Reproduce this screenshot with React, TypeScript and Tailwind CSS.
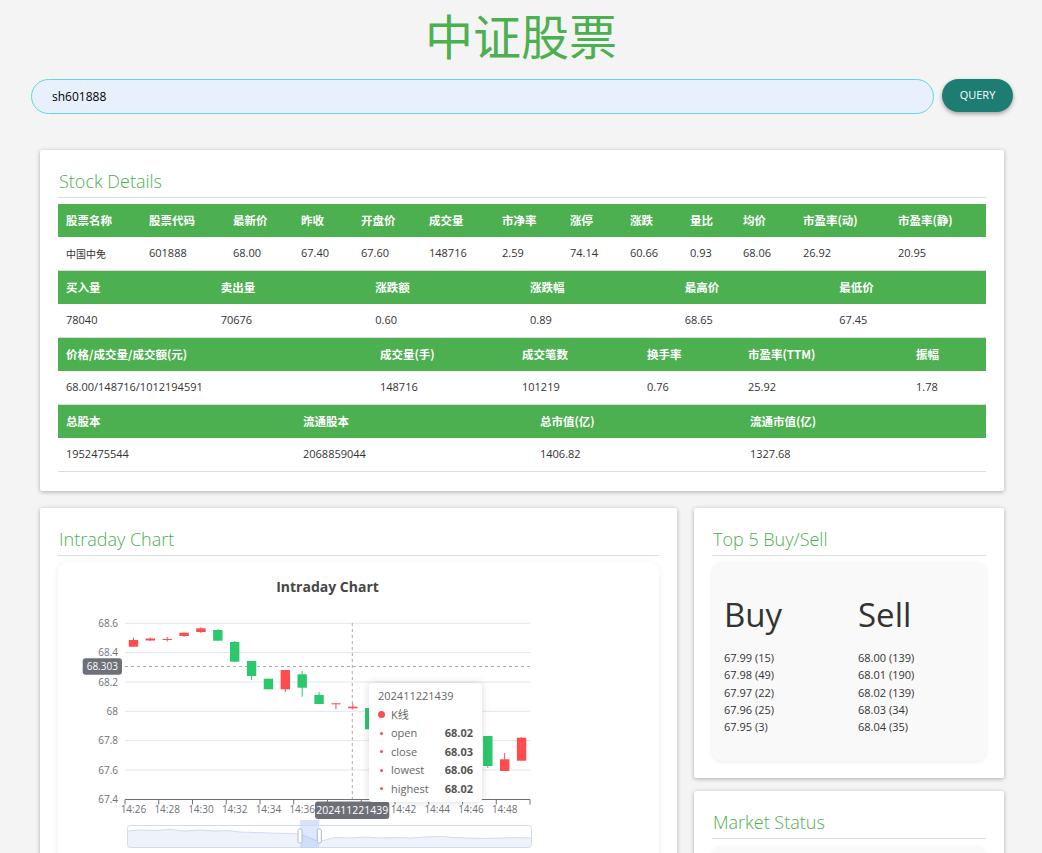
import React from "react";

const RED = "#ff4d4f";
const GREEN = "#2dc76d";

type Candle = [number, "r" | "g", number, number, number, number];

// [index, colour, bodyTop, bodyBottom, wickTop, wickBottom] in page pixels
const candles: Candle[] = [
  [0, "r", 640, 646.7, 637.7, 646.7],
  [1, "r", 638.5, 640.5, 637.5, 641],
  [2, "r", 639, 640, 637, 641.5],
  [3, "r", 632.7, 636, 632.5, 637],
  [4, "r", 628.3, 632, 627.3, 633],
  [5, "g", 630, 640.7, 629, 640.7],
  [6, "g", 642, 661.7, 641, 661.7],
  [7, "g", 661, 676, 661, 680],
  [8, "g", 678.7, 689.3, 678.7, 689.3],
  [9, "r", 670, 689.3, 670, 692],
  [10, "g", 674.3, 687.7, 671, 696.7],
  [11, "g", 695, 704, 692, 704],
  [12, "r", 703.3, 704.3, 703.3, 709.3],
  [13, "r", 706.7, 708.3, 703.5, 708.5],
  [14, "g", 708, 729.3, 708, 729.3],
  [15, "g", 728, 740, 727, 742],
  [16, "r", 732, 745, 730, 747],
  [17, "g", 740, 752, 738, 755],
  [18, "g", 745, 760, 744, 762],
  [19, "r", 748, 758, 746, 760],
  [20, "g", 742, 756, 741, 758],
  [21, "g", 736, 766, 736, 768],
  [22, "r", 759.3, 771, 753, 771],
  [23, "r", 737.7, 760.7, 737, 760.7],
];

const yLabels: [string, number][] = [
  ["68.6", 623.3],
  ["68.4", 652.6],
  ["68.2", 682],
  ["68", 711.3],
  ["67.8", 740.6],
  ["67.6", 770],
  ["67.4", 799.3],
];

const xLabels = ["14:26", "14:28", "14:30", "14:32", "14:34", "14:36", "", "", "14:42", "14:44", "14:46", "14:48"];

const cx = (i: number) => 125 + 16.875 * (i + 0.5);

function IntradaySvg() {
  return (
    <svg width="601" height="330" className="block font-['Open_Sans','Noto_Sans_CJK_SC',sans-serif]">
      <g transform="translate(-58 -562)">
        <text x="327.5" y="591.5" textAnchor="middle" fontSize="14" fontWeight="700" fill="#464646">
          Intraday Chart
        </text>
        {yLabels.map(([t, y]) => (
          <g key={t}>
            {t !== "67.4" && <line x1="125" x2="530" y1={y} y2={y} stroke="#e0e6f1" />}
            <text x="118" y={y + 3.5} textAnchor="end" fontSize="10" fill="#6e7079">
              {t}
            </text>
          </g>
        ))}
        {/* crosshair */}
        <line x1="352.3" x2="352.3" y1="623" y2="799" stroke="#aaa" strokeDasharray="3 3" />
        <line x1="125" x2="530" y1="666.5" y2="666.5" stroke="#aaa" strokeDasharray="3 3" />
        {candles.map(([i, c, bt, bb, wt, wb]) => {
          const col = c === "r" ? RED : GREEN;
          const x = cx(i);
          return (
            <g key={i}>
              <line x1={x} x2={x} y1={wt} y2={wb} stroke={col} strokeWidth="1" />
              <rect x={x - 4.7} y={bt} width="9.4" height={Math.max(bb - bt, 1)} fill={col} />
            </g>
          );
        })}
        {/* x axis */}
        <line x1="125" x2="530" y1="799.5" y2="799.5" stroke="#6e7079" />
        {Array.from({ length: 13 }).map((_, k) => (
          <line key={k} x1={125 + 33.75 * k} x2={125 + 33.75 * k} y1="799.5" y2="804.5" stroke="#6e7079" />
        ))}
        {xLabels.map((t, k) =>
          t ? (
            <text key={k} x={133.4 + 33.75 * k} y="812.8" textAnchor="middle" fontSize="10" fill="#6e7079">
              {t}
            </text>
          ) : null,
        )}
        {/* axis pointer labels */}
        <rect x="82.7" y="658.3" width="39.3" height="16.4" rx="3" fill="#6e7079" />
        <text x="102.3" y="670" textAnchor="middle" fontSize="10" fill="#fff">
          68.303
        </text>
        <rect x="315" y="801.5" width="74.3" height="17.5" rx="3" fill="#6e7079" />
        <text x="352.2" y="813.8" textAnchor="middle" fontSize="10.5" fill="#fff">
          202411221439
        </text>
        {/* data zoom */}
        <path
          d="M127.5,831 L140,830 L155,830.5 L170,829.5 L185,831 L200,830 L215,831 L228,830.5 L240,832 L255,832.5 L270,833 L285,833.5 L300,834 L310,838 L319,842 L325,840 L335,837.5 L350,838 L365,837 L380,838 L395,837.5 L410,838 L425,837 L440,836.5 L455,837.5 L470,838 L485,838.5 L500,838 L515,837.5 L531,838 L531,847.5 L127.5,847.5 Z"
          fill="#eef2fb"
          stroke="none"
        />
        <path
          d="M127.5,831 L140,830 L155,830.5 L170,829.5 L185,831 L200,830 L215,831 L228,830.5 L240,832 L255,832.5 L270,833 L285,833.5 L300,834 L310,838 L319,842 L325,840 L335,837.5 L350,838 L365,837 L380,838 L395,837.5 L410,838 L425,837 L440,836.5 L455,837.5 L470,838 L485,838.5 L500,838 L515,837.5 L531,838"
          fill="none"
          stroke="#d2dbee"
        />
        <rect x="127.5" y="825.5" width="404" height="22" rx="3" fill="none" stroke="#d2dbee" />
        <rect x="300" y="825.5" width="19.3" height="22" fill="#8fb0f7" opacity="0.3" />
        <rect x="300" y="820" width="19.3" height="5.5" fill="#d7e1f7" />
        <rect x="298" y="829" width="4" height="14" rx="1.5" fill="#fff" stroke="#acb8d1" />
        <rect x="317.3" y="829" width="4" height="14" rx="1.5" fill="#fff" stroke="#acb8d1" />
      </g>
    </svg>
  );
}

function Tooltip() {
  const rows: [string, string][] = [
    ["open", "68.02"],
    ["close", "68.03"],
    ["lowest", "68.06"],
    ["highest", "68.02"],
  ];
  return (
    <div className="absolute left-[311px] top-[121px] w-[113px] h-[119px] bg-white rounded-[4px] shadow-[0_0_8px_rgba(0,0,0,0.15)] pl-[9px] pr-[9px] pt-[4px] text-[11px] leading-[18.5px] text-[#666] font-['Open_Sans','Noto_Sans_CJK_SC',sans-serif]">
      <div>202411221439</div>
      <div className="flex items-center">
        <span className="w-[7px] h-[7px] rounded-full bg-[#ff4d4f] mr-[6px]" />
        <span>K线</span>
      </div>
      {rows.map(([k, v]) => (
        <div key={k} className="flex items-center">
          <span className="w-[3px] h-[3px] rounded-full bg-[#ff4d4f] ml-[2px] mr-[8px]" />
          <span className="flex-1">{k}</span>
          <span className="font-bold text-[#555]">{v}</span>
        </div>
      ))}
    </div>
  );
}

function SectionTitle({ children }: { children: React.ReactNode }) {
  return (
    <h2 className="text-[18px] leading-[24px] font-light text-[#4caf50] pb-[4px] border-b border-[#ddd] pl-px">
      {children}
    </h2>
  );
}

function DataTable({ grid, head, row }: { grid: string; head: string[]; row: React.ReactNode[] }) {
  return (
    <div>
      <div className={`grid ${grid} h-[33px] bg-[#4caf50]`}>
        {head.map((h) => (
          <div
            key={h}
            className="flex items-center px-2 text-[11.5px] font-bold text-white font-['Noto_Sans_CJK_SC',sans-serif]"
          >
            {h}
          </div>
        ))}
      </div>
      <div className={`grid ${grid} h-[34px] border-b border-[#ddd]`}>
        {row.map((v, i) => (
          <div key={i} className="flex items-center px-2 text-[11px] text-[#333]">
            {v}
          </div>
        ))}
      </div>
    </div>
  );
}

const cardCls = "bg-white rounded-[2px] shadow-[0_1px_4px_rgba(0,0,0,0.3)] px-[18px] pt-[19px]";

export default function App() {
  const buys = ["67.99 (15)", "67.98 (49)", "67.97 (22)", "67.96 (25)", "67.95 (3)"];
  const sells = ["68.00 (139)", "68.01 (190)", "68.02 (139)", "68.03 (34)", "68.04 (35)"];
  return (
    <div className="h-[853px] overflow-hidden bg-[#f4f4f4] font-['Open_Sans','Noto_Sans_CJK_SC',sans-serif] text-[#333]">
      <h1 className="pt-[10px] text-center text-[48px] leading-[48px] font-normal text-[#4caf50] font-['Noto_Sans_CJK_SC',sans-serif]">
        中证股票
      </h1>

      <div className="mt-[21px] flex items-start gap-[8px] pl-[31px] pr-[29px]">
        <input
          defaultValue="sh601888"
          className="flex-1 h-[35px] rounded-full border border-[#62d7e0] bg-[#e8f0fe] pl-[20px] text-[12px] text-black outline-none"
        />
        <button className="h-[33px] w-[71px] rounded-full bg-[#1d7d72] text-white text-[11px] shadow-[0_2px_4px_rgba(0,0,0,0.35)]">
          QUERY
        </button>
      </div>

      <div className="ml-[40px] w-[964px] mt-[36px]">
        <section className={`${cardCls} pb-[19px]`}>
          <SectionTitle>Stock Details</SectionTitle>
          <div className="mt-[6px]">
            <DataTable
              grid="grid-cols-[83px_84px_68px_60px_68px_73px_68px_60px_60px_53px_60px_95px_96px]"
              head={["股票名称", "股票代码", "最新价", "昨收", "开盘价", "成交量", "市净率", "涨停", "涨跌", "量比", "均价", "市盈率(动)", "市盈率(静)"]}
              row={[
                <span className="text-[10px] font-['Noto_Sans_CJK_SC',sans-serif]">中国中免</span>,
                "601888", "68.00", "67.40", "67.60", "148716", "2.59", "74.14", "60.66", "0.93", "68.06", "26.92", "20.95",
              ]}
            />
            <DataTable
              grid="grid-cols-6"
              head={["买入量", "卖出量", "涨跌额", "涨跌幅", "最高价", "最低价"]}
              row={["78040", "70676", "0.60", "0.89", "68.65", "67.45"]}
            />
            <DataTable
              grid="grid-cols-[314px_142px_125px_101px_168px_78px]"
              head={["价格/成交量/成交额(元)", "成交量(手)", "成交笔数", "换手率", "市盈率(TTM)", "振幅"]}
              row={["68.00/148716/1012194591", "148716", "101219", "0.76", "25.92", "1.78"]}
            />
            <DataTable
              grid="grid-cols-[237px_237px_210px_244px]"
              head={["总股本", "流通股本", "总市值(亿)", "流通市值(亿)"]}
              row={["1952475544", "2068859044", "1406.82", "1327.68"]}
            />
          </div>
        </section>

        <div className="mt-[17px] grid grid-cols-[637px_310px] gap-[17px] items-start">
          <section className={`${cardCls} pb-[18px]`}>
            <SectionTitle>Intraday Chart</SectionTitle>
            <div className="mt-[6px] relative h-[330px] rounded-[10px] bg-white shadow-[0_1px_6px_rgba(0,0,0,0.08)]">
              <IntradaySvg />
              <Tooltip />
            </div>
          </section>

          <div className="flex flex-col gap-[13px]">
            <section className={`${cardCls} pb-[17px]`}>
              <SectionTitle>Top 5 Buy/Sell</SectionTitle>
              <div className="mt-[6px] h-[199px] rounded-[10px] bg-[#f9f9f9] shadow-[0_1px_4px_rgba(0,0,0,0.08)] pl-[12px] pt-[33px] grid grid-cols-[134px_1fr]">
                <div>
                  <div className="text-[33px] leading-[40px] text-[#333]">Buy</div>
                  <div className="mt-[14px] text-[11px] leading-[17.3px]">
                    {buys.map((b) => (
                      <div key={b}>{b}</div>
                    ))}
                  </div>
                </div>
                <div>
                  <div className="text-[33px] leading-[40px] text-[#333]">Sell</div>
                  <div className="mt-[14px] text-[11px] leading-[17.3px]">
                    {sells.map((s) => (
                      <div key={s}>{s}</div>
                    ))}
                  </div>
                </div>
              </div>
            </section>

            <section className={`${cardCls} pb-[18px]`}>
              <SectionTitle>Market Status</SectionTitle>
              <div className="mt-[7px] h-[120px] rounded-[10px] bg-[#f9f9f9] shadow-[0_1px_4px_rgba(0,0,0,0.08)]" />
            </section>
          </div>
        </div>
      </div>
    </div>
  );
}
